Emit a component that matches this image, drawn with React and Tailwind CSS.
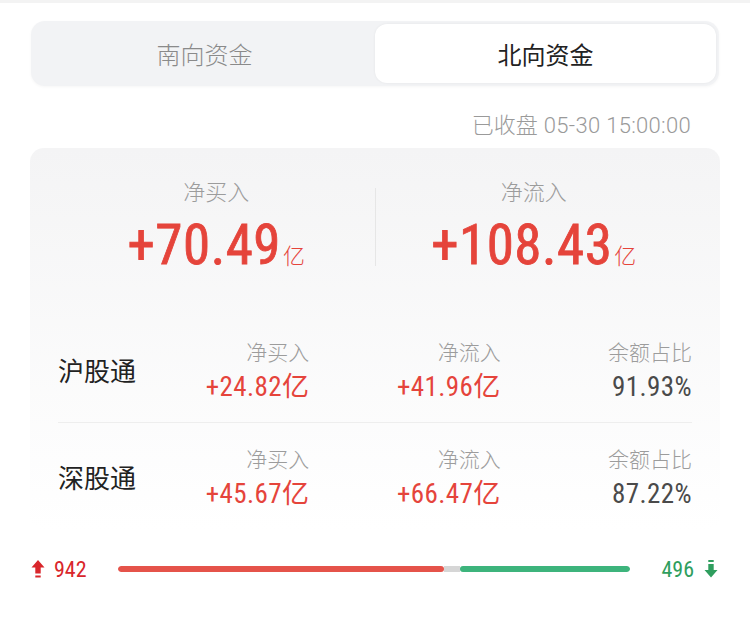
import React from "react";

const NUM = { fontFamily: '"Roboto Condensed","Liberation Sans Narrow","DejaVu Sans Condensed",Roboto,"Noto Sans CJK SC",sans-serif' };
const ROB = { fontFamily: 'Roboto,"Noto Sans CJK SC",sans-serif' };
const CJK = { fontFamily: '"Noto Sans CJK SC","Noto Sans",sans-serif' };

function UpArrow() {
  return (
    <svg width="14" height="20" viewBox="0 0 14 20">
      <path d="M7 1 L13.5 8.5 L9.7 8.5 L9.7 14.5 L4.3 14.5 L4.3 8.5 L0.5 8.5 Z" fill="#d9262b" />
      <rect x="4.3" y="16.5" width="5.4" height="2" fill="#d9262b" />
    </svg>
  );
}
function DownArrow() {
  return (
    <svg width="14" height="20" viewBox="0 0 14 20">
      <rect x="4.3" y="1" width="5.4" height="2" fill="#2f9e5e" />
      <path d="M4.3 5 L9.7 5 L9.7 11 L13.5 11 L7 18.5 L0.5 11 L4.3 11 Z" fill="#2f9e5e" />
    </svg>
  );
}

function Cell({ label, value, red }) {
  return (
    <div className="flex flex-col items-end">
      <div className="text-[21px] leading-[30px] text-[#9c9c9c] font-light" style={CJK}>{label}</div>
      <div
        className={`mt-[5px] text-[27px] leading-[32px] font-normal tracking-[0.4px] ${red ? "text-[#e5443b]" : "text-[#4a4a4a]"}`}
        style={NUM}
      >
        {value}
      </div>
    </div>
  );
}

function Row({ name, buy, flow, ratio, border }) {
  return (
    <div className={`grid grid-cols-[60px_1fr_1fr_1fr] items-center h-[107px] ${border ? "border-b border-[#eeeeee]" : ""}`}>
      <div className="text-[26px] text-[#222] whitespace-nowrap" style={CJK}>{name}</div>
      <Cell label="净买入" value={buy} red />
      <Cell label="净流入" value={flow} red />
      <Cell label="余额占比" value={ratio} />
    </div>
  );
}

function Big({ label, value }) {
  return (
    <div className="flex-1 flex flex-col items-center">
      <div className="text-[22px] leading-[30px] text-[#9c9c9c] font-light" style={CJK}>{label}</div>
      <div className="mt-[12px] h-[56px] flex items-baseline text-[#e5443b]">
        <span className="text-[55px] leading-[56px] font-normal tracking-[0.5px] [-webkit-text-stroke:0.8px_#e5443b]" style={NUM}>{value}</span>
        <span className="text-[22px] ml-[2px] font-light" style={CJK}>亿</span>
      </div>
    </div>
  );
}

export default function App() {
  return (
    <div className="w-[750px] h-[620px] bg-white border-t-[3px] border-[#f3f3f3] overflow-hidden">
      <div className="px-[31px] pt-[18px]">
        <div className="flex h-[65px] rounded-[14px] bg-[#f2f3f5] p-[3px] shadow-[0_1px_3px_rgba(0,0,0,0.04)]">
          <div className="flex-1 flex items-center justify-center text-[24px] text-[#8a8a8a] font-light" style={CJK}>南向资金</div>
          <div className="flex-1 flex items-center justify-center text-[24px] text-[#222] bg-white rounded-[12px] shadow-[0_0_3px_rgba(0,0,0,0.06)]" style={CJK}>北向资金</div>
        </div>
      </div>
      <div className="mt-[23px] h-[28px] pr-[59px] text-[#9a9a9a] flex justify-end items-baseline leading-[28px]">
        <span className="text-[22px] font-light" style={CJK}>已收盘</span>
        <span className="ml-[6px] text-[22px] font-light tracking-[0.3px]" style={ROB}>05-30 15:00:00</span>
      </div>
      <div className="mx-[30px] mt-[11px] rounded-[14px] bg-gradient-to-b from-[#f4f4f5] to-white px-[28px] pt-[27px] h-[382px]">
        <div className="flex pb-[43px]">
          <Big label="净买入" value="+70.49" />
          <div className="w-px bg-[#e6e6e6] mt-[13px] h-[78px]" />
          <Big label="净流入" value="+108.43" />
        </div>
        <Row name="沪股通" buy="+24.82亿" flow="+41.96亿" ratio="91.93%" border />
        <Row name="深股通" buy="+45.67亿" flow="+66.47亿" ratio="87.22%" />
      </div>
      <div className="mt-[29px] flex items-center pl-[31px] pr-[32px] h-[20px]">
        <UpArrow />
        <span className="ml-[9px] w-[40px] text-[22px] text-[#d9262b]" style={NUM}>942</span>
        <div className="ml-[24px] flex-1 flex h-[6px] rounded-full overflow-hidden">
          <div className="w-[326px] bg-[#e5534a] rounded-full" />
          <div className="w-[16px] bg-[#d6d6d6]" />
          <div className="flex-1 bg-[#3db47c] rounded-full" />
        </div>
        <span className="ml-[31px] text-[22px] text-[#2f9e5e]" style={NUM}>496</span>
        <span className="ml-[10px]"><DownArrow /></span>
      </div>
    </div>
  );
}
